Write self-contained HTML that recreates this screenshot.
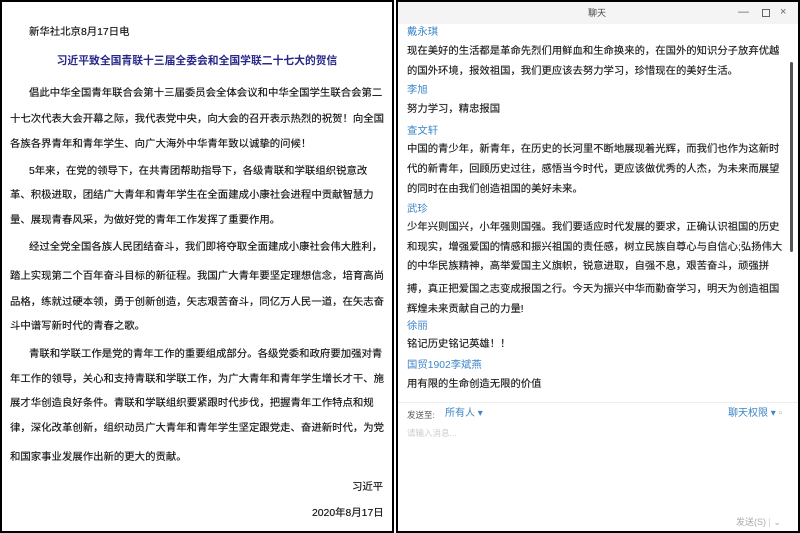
<!DOCTYPE html>
<html><head><meta charset="utf-8"><style>
*{margin:0;padding:0;box-sizing:border-box}
body{width:800px;height:533px;background:#fff;position:relative;overflow:hidden;font-family:"Liberation Sans","Noto Sans CJK SC",sans-serif}
#L{position:absolute;left:0;top:0;width:394px;height:533px;border:2px solid #000;background:#fff}
#R{position:absolute;left:396px;top:0;width:404px;height:533px;border:2px solid #000;background:#fff}
.t{position:absolute;left:8px;font-size:10.4px;color:#1a1a1a;white-space:nowrap;line-height:14px;text-shadow:0 0 0.4px #333}
.ti{position:absolute;left:0;width:390px;text-align:center;font-size:10.8px;font-weight:bold;color:#28288a;line-height:14px}
.r{position:absolute;left:9px;font-size:10.35px;color:#222;white-space:nowrap;line-height:14px;text-shadow:0 0 0.4px #444}
.n{color:#3d86c8;text-shadow:none}
</style></head><body>
<div id="L">
<div class="t" style="left:27px;top:24px">新华社北京8月17日电</div>
<div class="ti" style="top:52px">习近平致全国青联十三届全委会和全国学联二十七大的贺信</div>
<div class="t" style="left:27px;top:85px">倡此中华全国青年联合会第十三届委员会全体会议和中华全国学生联合会第二</div>
<div class="t" style="top:111px">十七次代表大会开幕之际，我代表党中央，向大会的召开表示热烈的祝贺！向全国</div>
<div class="t" style="top:136px">各族各界青年和青年学生、向广大海外中华青年致以诚挚的问候！</div>
<div class="t" style="left:27px;top:163px">5年来，在党的领导下，在共青团帮助指导下，各级青联和学联组织锐意改</div>
<div class="t" style="top:187px">革、积极进取，团结广大青年和青年学生在全面建成小康社会进程中贡献智慧力</div>
<div class="t" style="top:212px">量、展现青春风采，为做好党的青年工作发挥了重要作用。</div>
<div class="t" style="left:27px;top:239px">经过全党全国各族人民团结奋斗，我们即将夺取全面建成小康社会伟大胜利，</div>
<div class="t" style="top:268px">踏上实现第二个百年奋斗目标的新征程。我国广大青年要坚定理想信念，培育高尚</div>
<div class="t" style="top:294px">品格，练就过硬本领，勇于创新创造，矢志艰苦奋斗，同亿万人民一道，在矢志奋</div>
<div class="t" style="top:318px">斗中谱写新时代的青春之歌。</div>
<div class="t" style="left:27px;top:346px">青联和学联工作是党的青年工作的重要组成部分。各级党委和政府要加强对青</div>
<div class="t" style="top:371px">年工作的领导，关心和支持青联和学联工作，为广大青年和青年学生增长才干、施</div>
<div class="t" style="top:395px">展才华创造良好条件。青联和学联组织要紧跟时代步伐，把握青年工作特点和规</div>
<div class="t" style="top:420px">律，深化改革创新，组织动员广大青年和青年学生坚定跟党走、奋进新时代，为党</div>
<div class="t" style="top:449px">和国家事业发展作出新的更大的贡献。</div>
<div class="t" style="left:350px;top:479px">习近平</div>
<div class="t" style="left:310px;top:505px">2020年8月17日</div>
</div>
<div id="R">
<div style="position:absolute;left:0;top:0;width:400px;height:22px;background:#f4f4f4"></div>
<div class="r" style="left:190px;top:4px;font-size:9px;color:#444;text-shadow:none">聊天</div>
<div class="r" style="left:340px;top:3px;font-size:11px;color:#666;text-shadow:none">—</div>
<div style="position:absolute;left:364px;top:7px;width:8px;height:8px;border:1px solid #666"></div>
<div class="r" style="left:382px;top:3px;font-size:11px;color:#666;text-shadow:none">×</div>
<div class="r n" style="top:24px">戴永琪</div>
<div class="r" style="top:43px">现在美好的生活都是革命先烈们用鲜血和生命换来的，在国外的知识分子放弃优越</div>
<div class="r" style="top:63px">的国外环境，报效祖国，我们更应该去努力学习，珍惜现在的美好生活。</div>
<div class="r n" style="top:82px">李旭</div>
<div class="r" style="top:101px">努力学习，精忠报国</div>
<div class="r n" style="top:123px">查文轩</div>
<div class="r" style="top:141px">中国的青少年，新青年，在历史的长河里不断地展现着光辉，而我们也作为这新时</div>
<div class="r" style="top:161px">代的新青年，回顾历史过往，感悟当今时代，更应该做优秀的人杰，为未来而展望</div>
<div class="r" style="top:181px">的同时在由我们创造祖国的美好未来。</div>
<div class="r n" style="top:201px">武珍</div>
<div class="r" style="top:219px">少年兴则国兴，小年强则国强。我们要适应时代发展的要求，正确认识祖国的历史</div>
<div class="r" style="top:239px">和现实，增强爱国的情感和振兴祖国的责任感，树立民族自尊心与自信心;弘扬伟大</div>
<div class="r" style="top:258px">的中华民族精神，高举爱国主义旗帜，锐意进取，自强不息，艰苦奋斗，顽强拼</div>
<div class="r" style="top:281px">搏，真正把爱国之志变成报国之行。今天为振兴中华而勤奋学习，明天为创造祖国</div>
<div class="r" style="top:301px">辉煌未来贡献自己的力量!</div>
<div class="r n" style="top:318px">徐丽</div>
<div class="r" style="top:336px">铭记历史铭记英雄！！</div>
<div class="r n" style="top:357px">国贸1902李斌燕</div>
<div class="r" style="top:376px">用有限的生命创造无限的价值</div>
<div style="position:absolute;left:392px;top:60px;width:3px;height:190px;background:#555;border-radius:2px"></div>
<div style="position:absolute;left:0;top:400px;width:400px;height:1px;background:#eee"></div>
<div class="r" style="top:406px;font-size:8.5px;color:#555;text-shadow:none">发送至:</div>
<div class="r n" style="left:47px;top:405px;font-size:10px">所有人 ▾</div>
<div class="r n" style="left:330px;top:405px;font-size:10px">聊天权限 ▾ <span style="color:#aaa">▫</span></div>
<div class="r" style="top:424px;font-size:8.5px;color:#ccc;text-shadow:none">请输入消息...</div>
<div class="r" style="left:338px;top:513px;font-size:9px;color:#aaa;text-shadow:none">发送(S) <span style="color:#ccc">|</span> ⌄</div>
</div>
</body></html>
